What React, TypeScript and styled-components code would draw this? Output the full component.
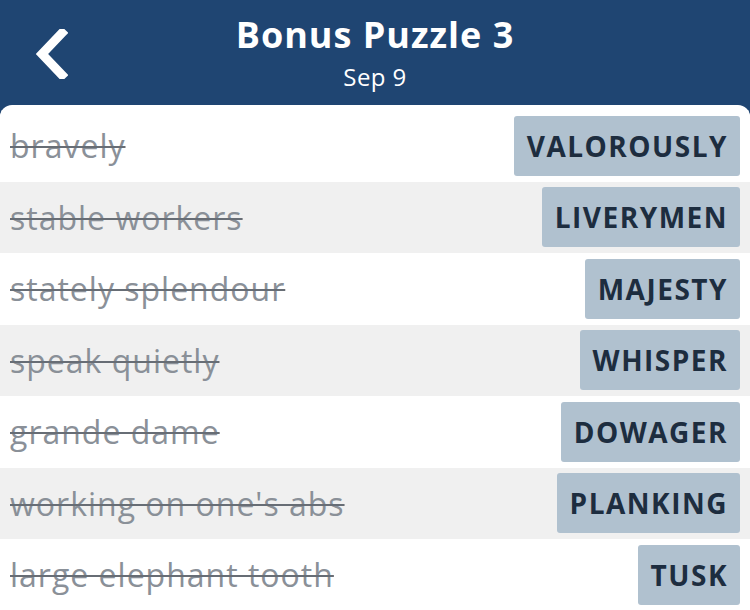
import React from "react";
import styled, { createGlobalStyle } from "styled-components";

interface Clue {
  hint: string;
  answer: string;
}

const clues: Clue[] = [
  { hint: "bravely", answer: "VALOROUSLY" },
  { hint: "stable workers", answer: "LIVERYMEN" },
  { hint: "stately splendour", answer: "MAJESTY" },
  { hint: "speak quietly", answer: "WHISPER" },
  { hint: "grande dame", answer: "DOWAGER" },
  { hint: "working on one's abs", answer: "PLANKING" },
  { hint: "large elephant tooth", answer: "TUSK" },
];

const App: React.FC = () => {
  return (
    <Page>
      <GlobalStyle />
      <Header>
        <BackButton aria-label="Back">
          <svg width="34" height="50" viewBox="0 0 34 50" fill="none">
            <path
              d="M28 4 L8 25 L28 46"
              stroke="#ffffff"
              strokeWidth="9"
              strokeLinecap="square"
              strokeLinejoin="miter"
            />
          </svg>
        </BackButton>
        <Title>Bonus Puzzle 3</Title>
        <Subtitle>Sep 9</Subtitle>
      </Header>
      <Panel>
        {clues.map((c, i) => (
          <Row key={c.answer} shaded={i % 2 === 1}>
            <Hint>{c.hint}</Hint>
            <Tile>{c.answer}</Tile>
          </Row>
        ))}
      </Panel>
    </Page>
  );
};

const GlobalStyle = createGlobalStyle`
  html, body {
    margin: 0;
    padding: 0;
    background: #1f4572;
    overflow: hidden;
  }
  * {
    box-sizing: border-box;
  }
`;

const Page = styled.div`
  width: 750px;
  height: 610px;
  display: flex;
  flex-direction: column;
  background: #1f4572;
  font-family: "Open Sans", "Lato", sans-serif;
`;

const Header = styled.div`
  position: relative;
  height: 105px;
  display: flex;
  flex-direction: column;
  align-items: center;
  padding-top: 12px;
  color: #ffffff;
`;

const BackButton = styled.div`
  position: absolute;
  left: 34px;
  top: 29px;
  width: 34px;
  height: 50px;
  display: flex;
`;

const Title = styled.div`
  font-size: 36px;
  font-weight: 700;
  line-height: 46px;
  letter-spacing: 1px;
`;

const Subtitle = styled.div`
  font-size: 24px;
  line-height: 30px;
  margin-top: 4px;
  letter-spacing: 0.4px;
`;

const Panel = styled.div`
  flex: 1;
  background: #ffffff;
  border-radius: 12px 12px 0 0;
  padding-top: 5px;
  display: flex;
  flex-direction: column;
  overflow: hidden;
`;

const Row = styled.div<{ shaded: boolean }>`
  height: 71.5px;
  flex-shrink: 0;
  display: flex;
  align-items: center;
  justify-content: space-between;
  padding: 0 10px 0 10px;
  background: ${(p) => (p.shaded ? "#f0f0f0" : "#ffffff")};
`;

const Hint = styled.div`
  font-size: 32px;
  letter-spacing: 1px;
  color: #8a9098;
  text-decoration: line-through;
  text-decoration-color: #676d75;
  text-decoration-thickness: 2px;
  white-space: nowrap;
`;

const Tile = styled.div`
  height: 60px;
  display: flex;
  align-items: center;
  padding: 0 12px 0 13px;
  background: #b0c1cf;
  border-radius: 3px;
  color: #1d2d3f;
  font-size: 28px;
  font-weight: 700;
  letter-spacing: 1.5px;
`;

export default App;
